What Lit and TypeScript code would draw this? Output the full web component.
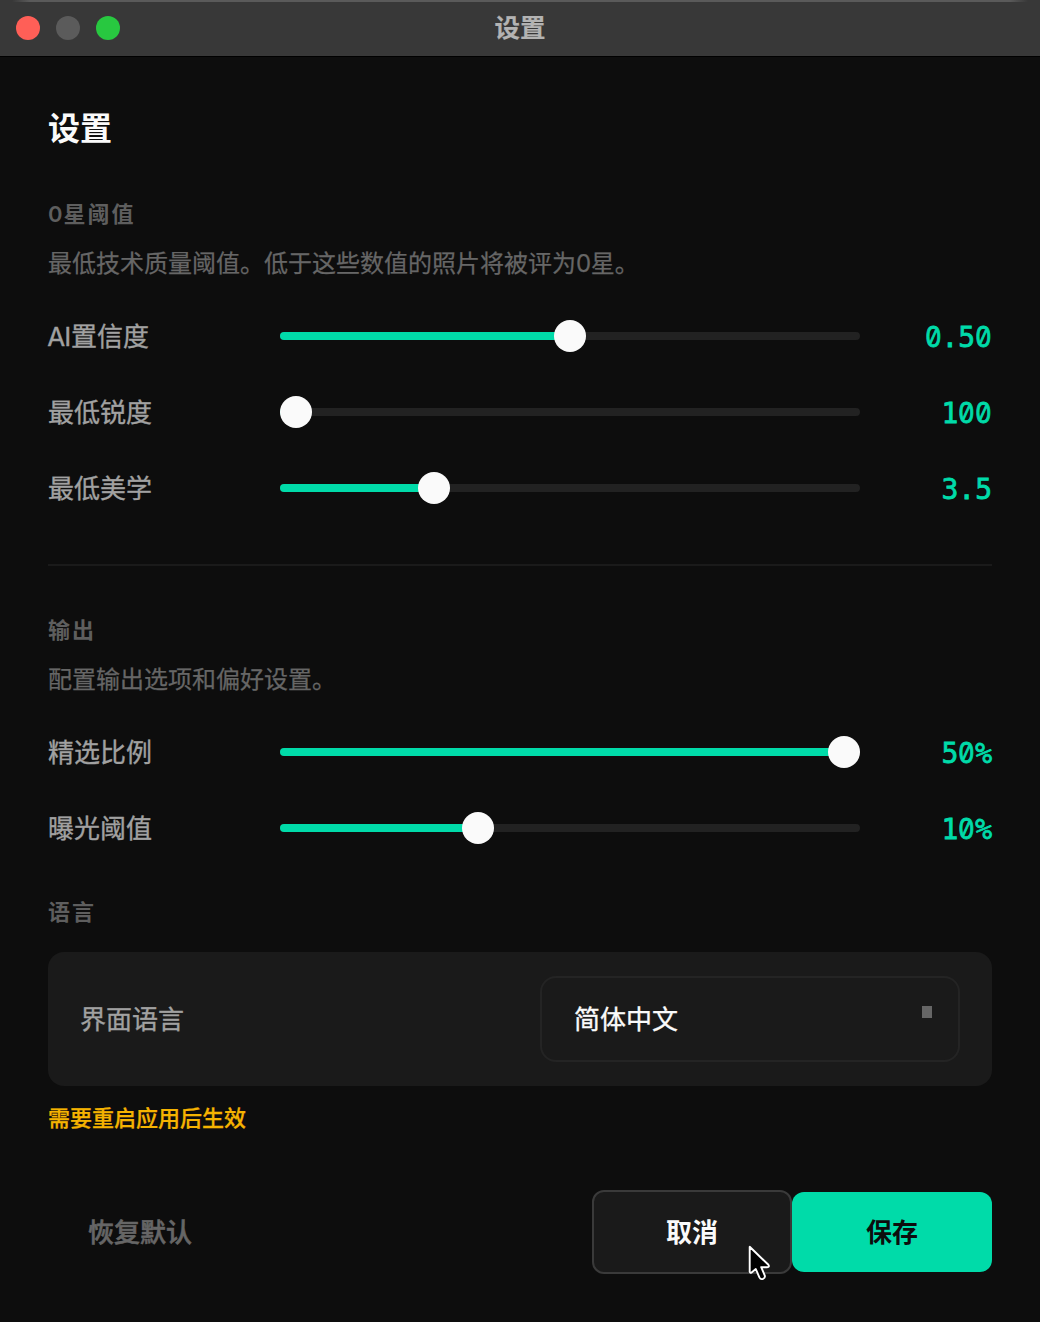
import { LitElement, html, css } from "lit";
import { customElement, property } from "lit/decorators.js";

@customElement("slider-row")
class SliderRow extends LitElement {
  @property() label = "";
  @property() value = "";
  @property({ type: Number }) position = 0;

  static styles = css`
    :host { display: flex; align-items: center; height: 76px; }
    .label { width: 232px; padding-top: 2px; font-size: 26px; line-height: 40px; color: #a1a1a1; -webkit-text-stroke: 0.35px #a1a1a1; }
    .latin { display: inline-block; width: 23px; letter-spacing: -0.8px; text-indent: -0.8px; }
    .track { width: 580px; height: 8px; border-radius: 4px; background: #222; display: flex; align-items: center; }
    .fill { height: 8px; border-radius: 4px 0 0 4px; background: #00dba9; flex: none; }
    .thumb { width: 32px; height: 32px; border-radius: 50%; background: #fafafa; flex: none; margin-left: -16px; }
    .value {
      flex: 1; text-align: right; color: #00dba9; line-height: 40px; padding-top: 3px;
      font-family: "DejaVu Sans Mono", "Liberation Mono", monospace; font-size: 28px;
      -webkit-text-stroke: 0.8px #00dba9;
    }
    .zero {
      display: inline-flex; justify-content: center; width: 16.86px;
      font-family: Inter, sans-serif; font-feature-settings: "zero" 1; transform: scaleX(0.92);
    }
  `;

  render() {
    const latin = this.label.match(/^[A-Z]+/)?.[0] ?? "";
    return html`
      <div class="label">${latin ? html`<span class="latin">${latin}</span>` : ""}${this.label.slice(latin.length)}</div>
      <div class="track">
        <div class="fill" style="width:${this.position}px"></div>
        <div class="thumb"></div>
      </div>
      <div class="value">${[...this.value].map((c) => (c === "0" ? html`<span class="zero">0</span>` : c))}</div>
    `;
  }
}

@customElement("app-root")
class AppRoot extends LitElement {
  static styles = css`
    :host {
      display: block; position: relative; width: 1040px; height: 1322px; overflow: hidden;
      background: #0d0d0d; color: #fafafa;
      font-family: Inter, "Noto Sans CJK SC", sans-serif;
    }
    * { box-sizing: border-box; }
    .frame { background: #383836; }
    .titlebar {
      height: 57px; background: #383838; border-bottom: 1px solid #000;
      background-image: linear-gradient(90deg, transparent 12px, #5a5a5a 30px, #5a5a5a 1010px, transparent 1028px);
      background-size: 100% 2px; background-repeat: no-repeat;
      display: grid; grid-template-columns: 1fr auto 1fr; align-items: center; padding: 0 16px;
    }
    .lights { display: flex; gap: 16px; }
    .light { width: 24px; height: 24px; border-radius: 50%; }
    .red { background: #ff5f57; }
    .gray { background: #5b5b5b; }
    .green { background: #28c840; }
    .caption { font-size: 25.5px; font-weight: 700; line-height: 40px; color: #b3b3b3; -webkit-text-stroke: 0.2px #b3b3b3; }
    .content { padding: 51px 48px 0; }
    h1 { margin: 0; padding-top: 1px; font-size: 32px; line-height: 40px; height: 40px; font-weight: 700; }
    h2 { margin: 0; font-size: 22px; line-height: 32px; height: 32px; font-weight: 700; letter-spacing: 1.9px; color: #5e5e5e; }
    .first { margin-top: 50px; }
    .zero { display: inline-block; width: 15.6px; font-weight: 600; font-size: 22px; }
    p { margin: 14px 0; font-size: 24px; line-height: 40px; height: 40px; color: #666; -webkit-text-stroke: 0.25px #666; }
    .digit { display: inline-block; width: 14.8px; letter-spacing: -0.5px; }
    .divider { height: 2px; margin: 38px 0 48px; background: #1a1a1a; }
    .language { margin-top: 30px; }
    .card {
      margin-top: 24px; height: 134px; border-radius: 16px; background: #1a1a1a; padding: 0 32px;
      display: flex; align-items: center; justify-content: space-between;
      font-size: 26px; line-height: 40px; color: #a1a1a1; -webkit-text-stroke: 0.35px;
    }
    .text { padding-top: 1px; }
    .select {
      width: 420px; height: 86px; border: 2px solid #242424; border-radius: 16px; color: #fafafa;
      padding: 0 26px 0 32px; display: flex; align-items: center; justify-content: space-between;
    }
    .marker { width: 10px; height: 12px; background: #666; margin-bottom: 14px; }
    .warning { margin-top: 16px; font-size: 22px; line-height: 32px; height: 32px; font-weight: 500; color: #f5b301; -webkit-text-stroke: 0.25px #f5b301; }
    .footer { margin-top: 56px; display: flex; align-items: center; height: 84px; }
    .button {
      width: 200px; height: 80px; border-radius: 12px; display: flex; align-items: center; justify-content: center;
      font-size: 26px; line-height: 40px; font-weight: 700; padding-top: 1px;
    }
    .reset { width: auto; padding: 1px 40px 0; margin-right: auto; color: #666; font-weight: 500; -webkit-text-stroke: 0.6px #666; }
    .cancel { height: 84px; background: #1a1a1a; border: 2px solid #3a3a3a; }
    .save { background: #00dba9; color: #0d0d0d; }
    .cursor { position: absolute; left: 744px; top: 1240px; }
  `;

  render() {
    return html`
      <div class="frame">
        <div class="titlebar">
          <div class="lights">
            <span class="light red"></span><span class="light gray"></span><span class="light green"></span>
          </div>
          <div class="caption">设置</div>
        </div>
      </div>
      <div class="content">
        <h1>设置</h1>
        <h2 class="first"><span class="zero">0</span>星阈值</h2>
        <p>最低技术质量阈值。低于这些数值的照片将被评为<span class="digit">0</span>星。</p>
        <slider-row label="AI置信度" value="0.50" .position=${290}></slider-row>
        <slider-row label="最低锐度" value="100" .position=${16}></slider-row>
        <slider-row label="最低美学" value="3.5" .position=${154}></slider-row>
        <div class="divider"></div>
        <h2>输出</h2>
        <p>配置输出选项和偏好设置。</p>
        <slider-row label="精选比例" value="50%" .position=${564}></slider-row>
        <slider-row label="曝光阈值" value="10%" .position=${198}></slider-row>
        <h2 class="language">语言</h2>
        <div class="card">
          <span class="text">界面语言</span>
          <div class="select"><span class="text">简体中文</span><span class="marker"></span></div>
        </div>
        <div class="warning">需要重启应用后生效</div>
        <div class="footer">
          <div class="button reset">恢复默认</div>
          <div class="button cancel">取消</div>
          <div class="button save">保存</div>
        </div>
      </div>
      <svg class="cursor" width="32" height="46" viewBox="0 0 32 46">
        <path d="M5.7 6.8V31.8Q6.2 33.4 7.6 32.4L11.8 29L15.4 37.4Q16.6 39.8 19 38.9Q21.6 37.8 20.7 35.3L17.2 27.2H23.4Q25.8 26.6 24.4 24.8Z" fill="#000" stroke="#fff" stroke-width="1.9" stroke-linejoin="round"/>
      </svg>
    `;
  }
}
